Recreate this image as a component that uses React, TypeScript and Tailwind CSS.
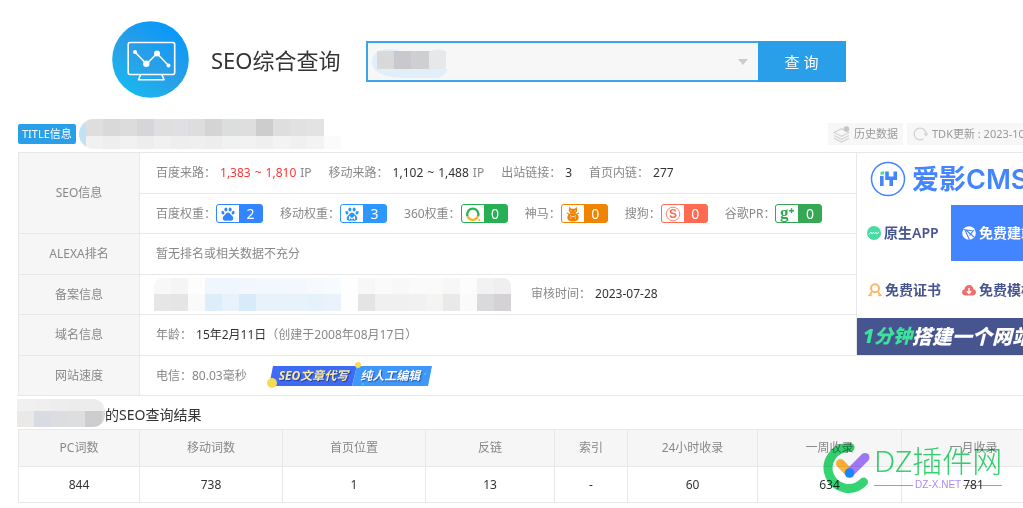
import type { ReactNode } from "react";

function MonitorLogo() {
  return (
    <svg viewBox="0 0 77 77" className="size-[77px] shrink-0" aria-hidden="true">
      <defs>
        <linearGradient id="disc" x1="0.1" y1="1" x2="0.8" y2="0">
          <stop offset="0" stopColor="#12bdf3" />
          <stop offset="0.5" stopColor="#2a9fe6" />
          <stop offset="1" stopColor="#0398fd" />
        </linearGradient>
      </defs>
      <circle cx="38.5" cy="38.5" r="38.3" fill="url(#disc)" />
      <g fill="none" stroke="#fff" strokeWidth="1.6" strokeLinejoin="round">
        <rect x="16.2" y="21.5" width="46.5" height="32" rx="2" />
        <path d="M28.5 54l-2 4.800h25.500l-2-4.800" />
        <path d="M23 31l11.500 12L45 32.500l11.500 12" strokeWidth="1.500" />
      </g>
      <g fill="#fff">
        <circle cx="23" cy="31" r="2" />
        <circle cx="34.300" cy="42.800" r="3.200" />
        <circle cx="45" cy="32.600" r="3" />
        <circle cx="56.500" cy="44.500" r="2" />
      </g>
    </svg>
  );
}

function Paw({ color, mobile }: { color: string; mobile?: boolean }) {
  return (
    <svg viewBox="0 0 14 14" className="size-[14px]" aria-hidden="true">
      <g fill={color}>
        <ellipse cx="4.900" cy="2.500" rx="1.500" ry="2" />
        <ellipse cx="9.100" cy="2.500" rx="1.500" ry="2" />
        <ellipse cx="1.900" cy="5.700" rx="1.400" ry="1.800" transform="rotate(-20 1.900 5.700)" />
        <ellipse cx="12.100" cy="5.700" rx="1.400" ry="1.800" transform="rotate(20 12.100 5.700)" />
        <path d="M7 5.600c1.500 0 2.200 1.200 3 2.200 1 1.100 2.300 1.900 2.300 3.500 0 1.500-1 2.500-2.400 2.500-1.100 0-1.800-.4-2.900-.4s-1.800.4-2.900.4c-1.400 0-2.400-1-2.400-2.500 0-1.600 1.300-2.400 2.300-3.500.8-1 1.500-2.200 3-2.200z" />
      </g>
      {mobile && <path d="M4.500 12.500V9.800l2.500 2 2.500-2v2.700" fill="none" stroke="#fff" strokeWidth="1.100" />}
    </svg>
  );
}

function Ring360() {
  return (
    <svg viewBox="0 0 16 16" className="size-4" aria-hidden="true">
      <path d="M2.600 10.300A5.600 5.600 0 1 1 13 10.300" fill="none" stroke="#2bb55b" strokeWidth="2.300" />
      <path d="M2.600 10.300A5.600 5.600 0 0 0 13 10.300" fill="none" stroke="#f6b52c" strokeWidth="2.300" />
      <circle cx="14.300" cy="14" r="1.100" fill="#f6b52c" />
    </svg>
  );
}

function Horse() {
  return (
    <svg viewBox="0 0 14 16" className="h-4 w-[14px]" aria-hidden="true">
      <path d="M3.200.8l2 1.900h3.600l2-1.900.4 4.200-1.700 2.300h-5L2.800 5z" fill="#f08300" />
      <path d="M4.300 7.200h5.400c2 1 3 2.500 3 4.400 0 2.400-2 4-5.700 4s-5.700-1.600-5.700-4c0-1.900 1-3.400 3-4.400z" fill="#f08300" />
      <path d="M1 7l2 1M13 7l-2 1" stroke="#f08300" strokeWidth="1.200" />
      <path d="M4.200 4.600l1.400.6M9.800 4.600l-1.400.6M4 9.500c1 1.500 5 1.500 6 0M4 12.500l1.300-1M10 12.500l-1.300-1" fill="none" stroke="#fff" strokeWidth=".7" />
    </svg>
  );
}

function Sogou() {
  return (
    <svg viewBox="0 0 16 16" className="size-4" aria-hidden="true">
      <circle cx="8" cy="8" r="6.800" fill="none" stroke="#ff6a50" strokeWidth=".8" />
      <text x="8" y="12.300" textAnchor="middle" fontFamily="Liberation Sans" fontWeight="700" fontSize="12" fill="#ff6a50">S</text>
    </svg>
  );
}

function GooglePlus() {
  return (
    <svg viewBox="0 0 16 16" className="size-4" aria-hidden="true">
      <text x="1" y="11.500" fontFamily="Liberation Serif" fontWeight="700" fontSize="17" fill="#34a853">g</text>
      <path d="M12.500 2.200v5M10 4.700h5" stroke="#34a853" strokeWidth="1.500" />
    </svg>
  );
}

function Item({ label, children }: { label: string; children: ReactNode }) {
  return (
    <div className="flex items-center">
      <span>{label}</span>
      {children}
    </div>
  );
}

function Weight({ label, tone, value, icon }: { label: string; tone: string; value: number; icon: ReactNode }) {
  return (
    <Item label={label}>
      <a href="#" className={`flex h-[19px] w-[47px] overflow-hidden rounded-[3px] border ${tone}`}>
        <span className="flex flex-1 items-center justify-center bg-white">{icon}</span>
        <span className="flex w-[23px] items-center justify-center text-sm leading-none text-white">{value}</span>
      </a>
    </Item>
  );
}

function Mosaic({ rows, className }: { rows: { h: string; cells: string[] }[]; className: string }) {
  return (
    <div className={`flex flex-col overflow-hidden ${className}`} aria-hidden="true">
      {rows.map((row, i) => (
        <div key={i} className={`flex ${row.h}`}>
          {row.cells.map((c, j) => (
            <span key={j} className="h-full w-[17px] shrink-0" style={{ background: c }} />
          ))}
        </div>
      ))}
    </div>
  );
}

const titleMosaic = [
  { h: "h-[17px]", cells: ["#dedede", "#d9d9d9", "#dcdcdc", "#d5d6da", "#dfdfdf", "#e2dfe4", "#dddddd", "#d4d4d5", "#dcdddd", "#dedede", "#cdcdce", "#dededf", "#e1e1e1", "#e3e3e3"] },
  { h: "h-[13px]", cells: ["#f1f1f1", "#eeeeee", "#f1f1f1", "#ededee", "#f1f1f1", "#eeeeee", "#efefef", "#ededed", "#f1f1f1", "#f2f2f2", "#efefef", "#f3f3f3", "#f0f0f0", "#f3f3f3", "#fbfbfb"] },
];
const recordMosaic = [
  { h: "h-4", cells: ["#f8f8f8", "#f5f5f5", "#fdfdfd", "#f0f6fd", "#f0f6fd", "#f1f7fd", "#f2f8fe", "#f2f8fe", "#f4f8fe", "#f6fafe", "#f8fbfe", "#fefefe", "#f7f7f7", "#fafafa", "#f8f8f8", "#fafafa", "#fafafa", "#f7f7f7", "#fcfcfc", "#f2f2f2", "#efefef"] },
  { h: "h-[17px]", cells: ["#e6e6e6", "#e5e5e5", "#fafafa", "#ddedf9", "#e8f2fc", "#d9ebf8", "#e8f2fb", "#e8f2fb", "#e8f2fb", "#e5f1fb", "#eaf3fc", "#fefefe", "#e4e4e4", "#f0f0f0", "#f0f0f0", "#f1f1f1", "#f4f4f2", "#e9e9e9", "#fafafa", "#dad9db", "#d4d2d5"] },
];
const domainMosaic = [
  { h: "h-[12px]", cells: ["#f0f0f0", "#efefef", "#ededed", "#ececec", "#ececed", "#efefef"] },
  { h: "h-[16px]", cells: ["#ebe9e7", "#d8dbe1", "#dcdde0", "#dddee0", "#cdcdcf", "#dadada"] },
];

const results = [
  { name: "PC词数", value: "844", w: "w-[121px]" },
  { name: "移动词数", value: "738", w: "w-[143px]" },
  { name: "首页位置", value: "1", w: "w-[143px]" },
  { name: "反链", value: "13", w: "w-[129px]" },
  { name: "索引", value: "-", w: "w-[73px]" },
  { name: "24小时收录", value: "60", w: "w-[130px]" },
  { name: "一周收录", value: "634", w: "w-[144px]" },
  { name: "一月收录", value: "781", w: "w-[144px]" },
];

const rowHead = "w-[121px] border border-[#e8e8e8] bg-[#f6f6f6] p-0 text-center font-normal";
const cell = "border border-[#e8e8e8] py-0 pr-0 pl-4";
const adLink = "flex items-center gap-[3px] text-sm font-semibold whitespace-nowrap";

function Ad() {
  return (
    <div className="w-[188px] bg-white text-[#46558f]">
      <div className="flex h-[52px] items-center gap-[6px] pl-[13px] whitespace-nowrap">
        <svg viewBox="0 0 36 36" className="size-9 shrink-0" aria-hidden="true">
          <circle cx="18" cy="18" r="16.500" fill="none" stroke="#4384ff" strokeWidth="1.500" />
          <g fill="none" stroke="#4384ff" strokeWidth="3.600">
            <path d="M11.800 15v10" />
            <path d="M17 10.500v6.700h8.300v-6.700M21.200 17v8" />
          </g>
          <path d="M10 13.500l.8-2.500 3.400-1v3.500z" fill="#3de29b" />
        </svg>
        <span className="font-[Inter,'Noto_Sans_CJK_SC',sans-serif] text-[27px] leading-none font-semibold text-[#4384ff]">爱影CMS</span>
      </div>
      <div className="grid grid-cols-2">
        <a href="#" className={`${adLink} h-14 pl-[10px]`}>
          <svg viewBox="0 0 14 14" className="size-[14px] shrink-0" aria-hidden="true">
            <circle cx="7" cy="7" r="7" fill="#45dda3" />
            <path d="M1.800 8.500L4 6l.8 2 1.700-2 .7 2 1.700-2 .8 2 2.500-2" fill="none" stroke="#fff" strokeWidth=".8" />
          </svg>
          原生APP
        </a>
        <a href="#" className={`${adLink} h-14 bg-[#4384ff] pl-[11px] text-white`}>
          <svg viewBox="0 0 14 14" className="size-[14px] shrink-0" aria-hidden="true">
            <circle cx="7" cy="7" r="6.800" fill="#fff" />
            <path d="M1.500 3.500l10 1.500M3 4l4.500 10M12 4L7.500 9.500M4.500 4.500l7.500 6.500" fill="none" stroke="#4384ff" strokeWidth="1.100" />
          </svg>
          免费建站
        </a>
        <a href="#" className={`${adLink} h-[57px] pl-[11px]`}>
          <svg viewBox="0 0 14 14" className="size-[14px] shrink-0" aria-hidden="true">
            <g fill="none" stroke="#fbb869">
              <circle cx="7" cy="5.300" r="4" strokeWidth="2" />
              <path d="M3.800 9L1.500 12.200l2.300.2M10.200 9l2.300 3.200-2.300.2" strokeWidth="1.800" />
            </g>
          </svg>
          免费证书
        </a>
        <a href="#" className={`${adLink} h-[57px] pl-[11px]`}>
          <svg viewBox="0 0 14 14" className="size-[14px] shrink-0" aria-hidden="true">
            <path d="M3.500 12.500C1.500 12.500 0 11.200 0 9.300c0-1.500 1-2.700 2.500-3C2.700 3.600 4.500 2 7 2s4.300 1.600 4.500 4.300c1.500.3 2.500 1.500 2.500 3 0 1.900-1.500 3.200-3.500 3.200z" fill="#ec6f6c" />
            <path d="M7 5v5M4.800 8.200L7 10.400l2.200-2.200" fill="none" stroke="#fff" strokeWidth="1.400" />
          </svg>
          免费模板
        </a>
      </div>
      <div className="flex h-[37px] items-center bg-[#46558f] pl-[6px] text-xl leading-none font-black whitespace-nowrap text-white italic">
        <span className="text-[19px] text-[#3de29b]">1分钟</span>搭建一个网站
      </div>
    </div>
  );
}

function Watermark() {
  return (
    <div className="pointer-events-none absolute top-[13px] left-[804px] flex items-center gap-1 mix-blend-multiply">
      <svg viewBox="0 0 48 52" className="h-[52px] w-12 shrink-0" aria-hidden="true">
        <path d="M28 5.500A20.500 20.500 0 1 0 41.500 40" fill="none" stroke="#35d472" strokeWidth="9" strokeLinecap="round" />
        <path d="M18.500 21.500l9 9.500" stroke="#ffb638" strokeWidth="9" strokeLinecap="round" />
        <path d="M28 30.500l15-15" stroke="#a47cfb" strokeWidth="9" strokeLinecap="round" />
        <circle cx="27.500" cy="31" r="4.800" fill="#1b86f9" />
      </svg>
      <div className="flex flex-col">
        <span className="text-[30px] leading-8 font-light whitespace-nowrap text-[#35d472]">DZ插件网</span>
        <span className="flex items-center gap-[2px] pt-[2px] font-['Liberation_Sans',sans-serif] text-[10px] leading-3 text-[#a98af8]">
          <i className="h-px flex-1 bg-[#a98af8]" />
          DZ-X.NET
          <i className="h-px flex-1 bg-[#a98af8]" />
        </span>
      </div>
    </div>
  );
}

export default function App() {
  return (
    <div className="min-h-screen overflow-hidden bg-white font-['Noto_Sans','Noto_Sans_CJK_SC',sans-serif] text-xs text-[#888]">
      <header className="flex items-center pt-[21px] pl-28">
        <MonitorLogo />
        <h1 className="ml-[22px] text-[22px] leading-8 whitespace-nowrap text-[#333]">SEO综合查询</h1>
        <form className="mt-1 ml-[25px] flex h-[41px] w-[480px]" onSubmit={(e) => e.preventDefault()}>
          <div className="relative flex flex-1 border-2 border-r-0 border-[#3aa6ec] bg-[#f7f7f7]">
            <input aria-label="域名" className="w-full bg-transparent px-3 text-base outline-none" />
            <svg viewBox="0 0 76 30" className="pointer-events-none absolute top-[5px] left-1 h-[30px] w-[76px]" aria-hidden="true">
              <path d="M0 14C0 6 7 1 16 1c7 0 10 2 16 2h26c6-3 16-2 16 4v14h2c-2 6-7 9-14 9H34C16 30 0 26 0 14z" fill="#e3eff8" />
              <path d="M5 3h17v18H5z" fill="#dad9d9" />
              <path d="M22 3h17v18H22z" fill="#c9c9cd" />
              <path d="M39 3h18v18H39z" fill="#cecfd1" />
              <path d="M57 3h17v18H57z" fill="#e7e8ea" />
            </svg>
            <svg viewBox="0 0 10 6" className="pointer-events-none absolute top-4 right-[10px] h-[6px] w-[10px]" aria-hidden="true">
              <path d="M0 0h10L5 6z" fill="#ccc" />
            </svg>
          </div>
          <button type="submit" className="w-[88px] bg-[#2a9fe9] text-[15px] text-white">查 询</button>
        </form>
      </header>

      <main className="min-w-[1046px] pl-[18px]">
        <div className="mt-[21px] flex h-[30px] items-center">
          <span className="flex h-5 items-center rounded-[2px] bg-[#2a9fe9] px-1 text-[11px] whitespace-nowrap text-white">TITLE信息</span>
          <div className="ml-[3px] flex overflow-hidden rounded-l-full bg-[#c3e1f4] pl-[7px]">
            <Mosaic rows={titleMosaic} className="bg-white" />
          </div>
          <div className="ml-auto flex w-[218px] shrink-0 gap-1 text-[11px] whitespace-nowrap text-[#999]">
            <a href="#" className="flex h-[22px] items-center gap-1 bg-[#f7f7f7] px-[5px]">
              <svg viewBox="0 0 17 17" className="size-[17px]" aria-hidden="true">
                <path d="M1 6.500l7.500-3.800L16 6.500l-7.500 3.800zM1 9.500l7.500 3.800L16 9.500M1 12.300l7.500 3.800 7.500-3.800" fill="none" stroke="#d2d2d2" strokeWidth="1.100" />
                <circle cx="13.500" cy="3" r="2.800" fill="#c6c6c6" />
              </svg>
              历史数据
            </a>
            <a href="#" className="flex h-[22px] flex-1 items-center gap-[3px] bg-[#f7f7f7] px-[6px]">
              <svg viewBox="0 0 16 16" className="size-4" aria-hidden="true">
                <path d="M10.500 12.800A5.900 5.900 0 1 1 13 8.500" fill="none" stroke="#d2d2d2" strokeWidth="1.300" />
                <path d="M10.500 7.500h5L13 10.500z" fill="#d2d2d2" />
              </svg>
              TDK更新 : 2023-10
            </a>
          </div>
        </div>

        <table className="mt-[3px] w-full table-fixed border-collapse">
          <colgroup>
            <col className="w-[121px]" />
            <col />
            <col className="w-[189px]" />
          </colgroup>
          <tbody>
            <tr className="h-[41px]">
              <th scope="row" rowSpan={2} className={rowHead}>SEO信息</th>
              <td className={cell}>
                <div className="flex gap-[17px]">
                  <Item label="百度来路：">
                    <span className="mx-1 flex gap-1 text-[#f33]"><span>1,383</span><span>~</span><span>1,810</span></span>IP
                  </Item>
                  <Item label="移动来路：">
                    <span className="mx-1 flex gap-1 text-[#333]"><span>1,102</span><span>~</span><span>1,488</span></span>IP
                  </Item>
                  <Item label="出站链接："><span className="ml-1 text-[#333]">3</span></Item>
                  <Item label="首页内链："><span className="ml-1 text-[#333]">277</span></Item>
                </div>
              </td>
              <td rowSpan={5} className="border border-[#e8e8e8] p-0 align-top"><Ad /></td>
            </tr>
            <tr className="h-10">
              <td className={cell}>
                <div className="flex gap-[17px]">
                  <Weight label="百度权重：" tone="border-[#3385ff] bg-[#3385ff]" value={2} icon={<Paw color="#3385ff" />} />
                  <Weight label="移动权重：" tone="border-[#2e96ff] bg-[#2e96ff]" value={3} icon={<Paw color="#2e96ff" mobile />} />
                  <Weight label="360权重：" tone="border-[#27b053] bg-[#27b053]" value={0} icon={<Ring360 />} />
                  <Weight label="神马：" tone="border-[#f08300] bg-[#f08300]" value={0} icon={<Horse />} />
                  <Weight label="搜狗：" tone="border-[#ff6a50] bg-[#ff6a50]" value={0} icon={<Sogou />} />
                  <Weight label="谷歌PR：" tone="border-[#34a853] bg-[#34a853]" value={0} icon={<GooglePlus />} />
                </div>
              </td>
            </tr>
            <tr className="h-[41px]">
              <th scope="row" className={rowHead}>ALEXA排名</th>
              <td className={cell}>暂无排名或相关数据不充分</td>
            </tr>
            <tr className="h-10">
              <th scope="row" className={rowHead}>备案信息</th>
              <td className="border border-[#e8e8e8] pt-0 pb-px pl-[14px]">
                <div className="flex items-center">
                  <Mosaic rows={recordMosaic} className="rounded-t-lg" />
                  <span className="ml-5">审核时间：</span>
                  <span className="ml-1 text-[#333]">2023-07-28</span>
                </div>
              </td>
            </tr>
            <tr className="h-[41px]">
              <th scope="row" className={rowHead}>域名信息</th>
              <td className={cell}>
                年龄：<span className="ml-1 text-[#333]">15年2月11日</span>（创建于2008年08月17日）
              </td>
            </tr>
            <tr className="h-10">
              <th scope="row" className={rowHead}>网站速度</th>
              <td colSpan={2} className={cell}>
                <div className="flex items-center gap-5">
                  <span>电信：80.03毫秒</span>
                  <a href="#" className="relative flex h-[27px] w-[165px] items-center pl-3 font-bold whitespace-nowrap italic">
                    <svg viewBox="0 0 165 27" className="absolute inset-0 h-[27px] w-[165px]" aria-hidden="true">
                      <path d="M6 4h84l-5 20H2z" fill="#3f6af5" />
                      <path d="M90 4h75l-4 20H85z" fill="#3f97fb" />
                      <circle cx="5" cy="21" r="5" fill="#f6dc55" />
                      <circle cx="91" cy="3" r="3" fill="#f6dc55" />
                      <path d="M157 11h2v2h-2zM95 21h2v2h-2z" fill="#22d3ee" />
                    </svg>
                    <span className="relative text-[#f8eca0] [text-shadow:1px_1px_1px_#24399a]">SEO文章代写</span>
                    <span className="relative ml-3 text-white [text-shadow:1px_1px_1px_#2456a8]">纯人工编辑</span>
                  </a>
                </div>
              </td>
            </tr>
          </tbody>
        </table>

        <h2 className="-ml-px flex h-[33px] items-center pt-1 text-sm text-[#333]">
          <Mosaic rows={domainMosaic} className="mb-1 w-[88px] rounded-r-xl" />
          的SEO查询结果
        </h2>

        <div className="relative">
          <table className="w-full table-fixed border-collapse text-center">
            <thead>
              <tr className="h-[37px] bg-[#f6f6f6]">
                {results.map((r) => (
                  <th key={r.name} scope="col" className={`${r.w} border border-[#e8e8e8] p-0 font-normal`}>{r.name}</th>
                ))}
              </tr>
            </thead>
            <tbody>
              <tr className="h-9 text-[#333]">
                {results.map((r) => (
                  <td key={r.name} className="border border-[#e8e8e8] p-0">{r.value}</td>
                ))}
              </tr>
            </tbody>
          </table>
          <Watermark />
        </div>
      </main>
    </div>
  );
}
